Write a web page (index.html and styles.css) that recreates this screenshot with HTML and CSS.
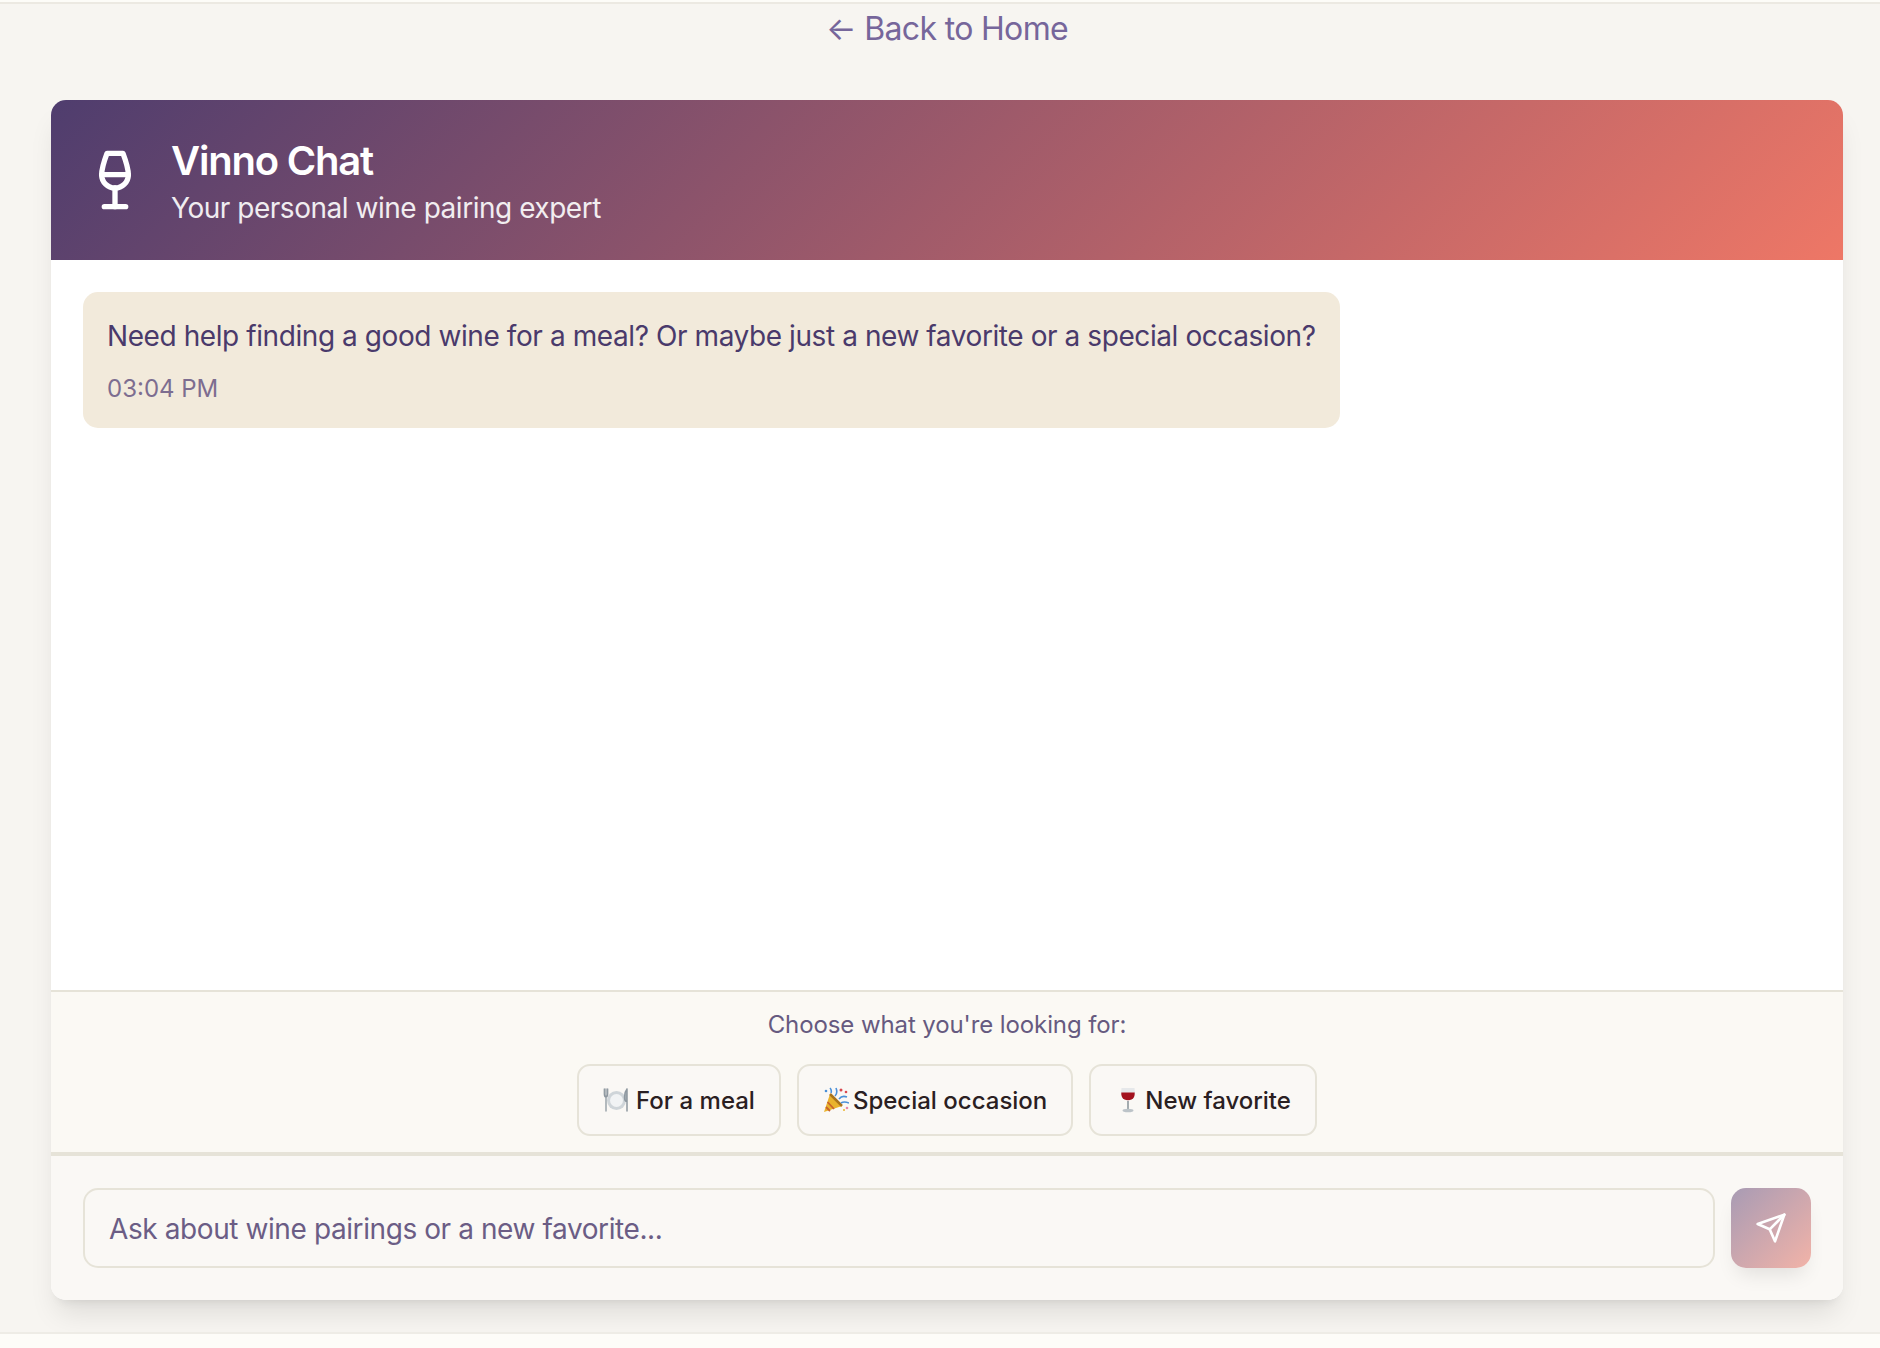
FILE: index.html
```html
<!DOCTYPE html>
<html lang="en">
<head>
  <meta charset="UTF-8" />
  <title>Vinno Chat</title>
  <link rel="stylesheet" href="styles.css">
</head>
<body>

  <div class="top-strip"></div>

  <main class="page">
    <a class="back-link" href="#">← Back to Home</a>

    <section class="chat-card">
      <!-- Header -->
      <header class="chat-header">
        <svg class="wine-icon" viewBox="0 0 24 24" fill="none" stroke="currentColor" stroke-width="2" stroke-linecap="round" stroke-linejoin="round">
          <path d="M8 22h8"/>
          <path d="M7 10h10"/>
          <path d="M12 15v7"/>
          <path d="M12 15a5 5 0 0 0 5-5c0-2-.5-4-2-8H9c-1.500 4-2 6-2 8a5 5 0 0 0 5 5Z"/>
        </svg>
        <div class="header-text">
          <h1>Vinno Chat</h1>
          <p>Your personal wine pairing expert</p>
        </div>
      </header>

      <!-- Messages -->
      <div class="messages">
        <div class="bubble">
          <p class="bubble-text">Need help finding a good wine for a meal? Or maybe just a new favorite or a special occasion?</p>
          <p class="bubble-time">03:04 PM</p>
        </div>
      </div>

      <!-- Quick choices -->
      <div class="choices">
        <p class="choices-label">Choose what you're looking for:</p>
        <div class="choices-row">
          <button class="chip chip-meal">
            <svg class="emoji" viewBox="0 0 26 26">
              <circle cx="13.500" cy="13.500" r="9.500" fill="#cfd5d9"/>
              <circle cx="13.500" cy="13.500" r="6.500" fill="#f1f3f4"/>
              <path d="M3 2v22M1.300 2v5q0 3 1.700 3t1.700-3V2" stroke="#8d979f" stroke-width="1.300" fill="none" stroke-linecap="round"/>
              <path d="M24 2v22M24 2q-2.500 3-2.500 8t2.500 4" stroke="#8d979f" stroke-width="1.500" fill="#a7b0b6" stroke-linecap="round"/>
            </svg>
            For a meal
          </button>
          <button class="chip">
            <svg class="emoji" viewBox="0 0 26 26">
              <path d="M7 7 1 25l18-6Z" fill="#eab32d"/>
              <path d="M4.500 15 11 22M3 20l4 4" stroke="#c9632c" stroke-width="1.800"/>
              <path d="M7 7 19 19" stroke="#a9741d" stroke-width="2.500"/>
              <path d="M12 9q3-3 1-8M16 12q3-4 8-2M18 16q3-2 8 0M8 6Q9 3 7 1" stroke="#4a90d9" stroke-width="1.600" fill="none"/>
              <circle cx="18" cy="3" r="1.500" fill="#d9484f"/>
              <circle cx="23" cy="5" r="1.300" fill="#d9484f"/>
              <circle cx="3" cy="4" r="1.300" fill="#4a90d9"/>
              <circle cx="24" cy="21" r="1.300" fill="#e887a8"/>
              <circle cx="21" cy="23" r="1" fill="#eab32d"/>
            </svg>
            Special occasion
          </button>
          <button class="chip">
            <svg class="emoji" viewBox="0 0 26 26">
              <path d="M6.500 1h13q1.500 9-3 11.500-3.500 2-7 0Q5 10 6.500 1Z" fill="#e6e8ea"/>
              <path d="M6.300 5.500h13.400q.3 5.500-3.200 7-3.500 1.500-7 0-3.500-1.500-3.200-7Z" fill="#a3121e"/>
              <path d="M13 14v8" stroke="#9aa2a8" stroke-width="1.800"/>
              <ellipse cx="13" cy="23.500" rx="5.500" ry="1.800" fill="#bcc3c8"/>
            </svg>
            New favorite
          </button>
        </div>
      </div>

      <!-- Input -->
      <form class="composer">
        <input class="composer-input" type="text" placeholder="Ask about wine pairings or a new favorite...">
        <button class="send-button" type="button">
          <svg class="send-icon" viewBox="0 0 24 24" fill="none" stroke="currentColor" stroke-width="2" stroke-linecap="round" stroke-linejoin="round">
            <path d="m22 2-7 20-4-9-9-4Z"/>
            <path d="M22 2 11 13"/>
          </svg>
        </button>
      </form>
    </section>
  </main>

  <div class="bottom-strip"></div>

</body>
</html>
```

FILE: styles.css
```css
html, body {
  margin: 0;
  padding: 0;
  height: 100%;
  overflow: hidden;
}

body {
  display: flex;
  flex-direction: column;
  background: #f7f5f1;
  font-family: 'Inter', 'Liberation Sans', sans-serif;
  color: #4a3a6b;
}

p, h1 {
  margin: 0;
}

.top-strip {
  height: 2px;
  background: #fdfcf8;
  border-bottom: 2px solid #ece9e2;
}

.bottom-strip {
  height: 14px;
  background: #fdfcf8;
  border-top: 2px solid #eeece6;
}

.page {
  flex: 1;
  min-height: 0;
  display: flex;
  flex-direction: column;
  align-items: center;
  padding: 4px 37px 32px 51px;
}

.back-link {
  height: 42px;
  line-height: 42px;
  margin-bottom: 50px;
  font-size: 32px;
  letter-spacing: -0.66px;
  color: #76669b;
  text-decoration: none;
}

.chat-card {
  flex: 1;
  width: 100%;
  min-height: 0;
  display: flex;
  flex-direction: column;
  border-radius: 15px;
  background: #ffffff;
  overflow: hidden;
  box-shadow: 0 19px 28px -6px rgba(0, 0, 0, 0.1), 0 8px 11px -8px rgba(0, 0, 0, 0.1);
}

.chat-header {
  height: 160px;
  flex: none;
  display: flex;
  align-items: center;
  gap: 24px;
  padding: 0 32px;
  color: #ffffff;
  background: linear-gradient(135deg, #4f3d6e, #ee7766);
}

.wine-icon {
  width: 64px;
  height: 64px;
}

.header-text {
  padding-top: 4px;
}

.chat-header h1 {
  font-size: 40px;
  line-height: 48px;
  font-weight: 600;
  letter-spacing: -1.2px;
}

.chat-header p {
  margin-top: 3px;
  font-size: 28px;
  line-height: 40px;
  letter-spacing: -0.47px;
  opacity: 0.9;
}

.messages {
  flex: 1;
  min-height: 0;
  padding: 32px;
}

.bubble {
  display: inline-block;
  padding: 24px 24px 21px;
  border-radius: 15px;
  background: #f2eadb;
}

.bubble-text {
  font-size: 28px;
  line-height: 40px;
  letter-spacing: -0.42px;
}

.bubble-time {
  margin-top: 15px;
  font-size: 24px;
  line-height: 36px;
  color: #7d6d90;
}

.choices {
  flex: none;
  height: 162px;
  box-sizing: border-box;
  padding-top: 15px;
  border-top: 2px solid #e6e3d8;
  background: #fbf9f4;
}

.choices-label {
  font-size: 24px;
  line-height: 36px;
  letter-spacing: -0.1px;
  text-align: center;
  color: #665a80;
}

.choices-row {
  display: flex;
  justify-content: center;
  gap: 16px;
  margin-top: 21px;
}

.chip {
  display: flex;
  align-items: center;
  gap: 4px;
  height: 72px;
  padding: 0 24px;
  border: 2px solid #e6e3d8;
  border-radius: 13px;
  background: #faf8f5;
  font-family: inherit;
  font-size: 24px;
  font-weight: 500;
  color: #2a2022;
}

.chip-meal {
  gap: 7px;
}

.emoji {
  width: 26px;
  height: 26px;
}

.composer {
  flex: none;
  height: 148px;
  box-sizing: border-box;
  display: flex;
  gap: 16px;
  padding: 32px;
  border-top: 4px solid #e6e3d8;
  background: #faf8f5;
}

.composer-input {
  flex: 1;
  min-width: 0;
  height: 80px;
  box-sizing: border-box;
  padding: 2px 24px 0;
  border: 2px solid #e6e3d8;
  border-radius: 15px;
  background: #faf8f5;
  font-family: inherit;
  font-size: 28px;
  letter-spacing: -0.41px;
  color: #4a3a6b;
}

.composer-input::placeholder {
  color: #6b5d85;
  opacity: 1;
}

.send-button {
  flex: none;
  width: 80px;
  height: 80px;
  display: flex;
  align-items: center;
  justify-content: center;
  border: 0;
  border-radius: 15px;
  color: #ffffff;
  background: linear-gradient(135deg, #a89bb4, #f2b3a8);
  box-shadow: 0 12px 20px -6px rgba(0, 0, 0, 0.1);
}

.send-icon {
  width: 32px;
  height: 32px;
}
```
